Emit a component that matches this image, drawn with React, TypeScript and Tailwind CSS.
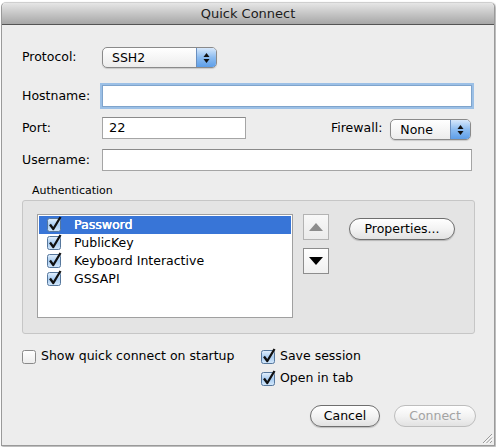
import React from "react";

const FONT = { fontFamily: '"Lucida Grande", "DejaVu Sans", sans-serif' };

function Check({ checked }: { checked: boolean }) {
  return (
    <svg width="16" height="16" viewBox="0 0 16 16" className="shrink-0">
      <defs>
        <linearGradient id={checked ? "cbOn" : "cbOff"} x1="0" y1="0" x2="0" y2="1">
          {checked ? (
            <>
              <stop offset="0" stopColor="#e4f0fc" />
              <stop offset="0.5" stopColor="#a9cdf2" />
              <stop offset="1" stopColor="#d4e8fb" />
            </>
          ) : (
            <>
              <stop offset="0" stopColor="#ffffff" />
              <stop offset="1" stopColor="#ececec" />
            </>
          )}
        </linearGradient>
      </defs>
      <rect
        x="0.5"
        y="2.5"
        width="13"
        height="13"
        rx="2"
        fill={`url(#${checked ? "cbOn" : "cbOff"})`}
        stroke={checked ? "#56779c" : "#8a8a8a"}
      />
      {checked && (
        <path d="M3 8.5 L6.3 13 L13.5 1" fill="none" stroke="#111" strokeWidth="2.3" strokeLinejoin="round" />
      )}
    </svg>
  );
}

function PopUp({ value, width }: { value: string; width: number }) {
  return (
    <div
      className="flex h-[21px] overflow-hidden rounded-[5px] border border-[#8a8a8a] bg-gradient-to-b from-white to-[#ececec] shadow-[0_1px_1px_rgba(0,0,0,0.15)]"
      style={{ width }}
    >
      <div className="flex-1 pl-[9px] text-[12.5px] leading-[19px] text-black">{value}</div>
      <div className="flex w-[20px] items-center justify-center border-l border-[#6a8fbf] bg-gradient-to-b from-[#d7e8fb] via-[#8cbcf0] to-[#5d9ee8]">
        <svg width="7" height="12" viewBox="0 0 7 12">
          <path d="M3.5 1 L6.5 5 L0.5 5 Z" fill="#111" />
          <path d="M3.5 11 L6.5 7 L0.5 7 Z" fill="#111" />
        </svg>
      </div>
    </div>
  );
}

function TextField({ value = "", focus = false, width }: { value?: string; focus?: boolean; width: number }) {
  return (
    <div
      className={
        "h-[22px] bg-white text-[13px] leading-[20px] text-black pl-[6px] " +
        (focus
          ? "border border-[#7fa4cc] shadow-[0_0_0_2px_#9cc0e6]"
          : "border border-[#a5a5a5] border-t-[#8a8a8a]")
      }
      style={{ width }}
    >
      {value}
    </div>
  );
}

function PillButton({ label, width, disabled = false }: { label: string; width: number; disabled?: boolean }) {
  return (
    <div
      className={
        "flex h-[22px] items-center justify-center rounded-full border bg-gradient-to-b from-white via-[#f3f3f3] to-[#e2e2e2] text-[12.5px] " +
        (disabled ? "border-[#bdbdbd] text-[#a3a3a3]" : "border-[#6e6e6e] text-black shadow-[0_1px_1px_rgba(0,0,0,0.2)]")
      }
      style={{ width }}
    >
      {label}
    </div>
  );
}

const METHODS = ["Password", "PublicKey", "Keyboard Interactive", "GSSAPI"];

export default function App() {
  return (
    <div className="h-[447px] w-[496px] bg-white" style={FONT}>
      <div className="ml-[1px] pt-[2px]">
        <div className="flex h-[444px] w-[494px] flex-col rounded-t-[5px] border border-[#9a9a9a] border-t-[#cfcfcf] bg-[#ededed] shadow-[1px_1px_2px_rgba(0,0,0,0.35)]">
          {/* Title bar */}
          <div className="flex h-[22px] items-center justify-center rounded-t-[5px] border-b border-[#545454] bg-gradient-to-b from-[#e6e6e6] to-[#a7a7a7] text-[13px] text-[#1c1c1c]">
            Quick Connect
          </div>

          <div className="flex flex-1 flex-col pl-[20px] text-[12.5px] text-black">
            {/* Protocol */}
            <div className="mt-[22px] flex h-[21px] items-center">
              <div className="w-[80px]">Protocol:</div>
              <PopUp value="SSH2" width={115} />
            </div>

            {/* Hostname */}
            <div className="mt-[17px] flex h-[22px] items-center">
              <div className="w-[80px]">Hostname:</div>
              <TextField focus width={370} />
            </div>

            {/* Port / Firewall */}
            <div className="mt-[10px] flex h-[22px] items-center">
              <div className="w-[80px]">Port:</div>
              <TextField value="22" width={144} />
              <div className="ml-[85px] mr-[8px]">Firewall:</div>
              <div className="mt-[3px]">
                <PopUp value="None" width={81} />
              </div>
            </div>

            {/* Username */}
            <div className="mt-[10px] flex h-[22px] items-center">
              <div className="w-[80px]">Username:</div>
              <TextField width={370} />
            </div>

            {/* Authentication */}
            <div className="mt-[13px] pl-[10px] text-[11px] leading-[14px]">Authentication</div>
            <div className="mt-[2px] flex h-[134px] w-[453px] rounded-[3px] border border-[#c6c6c6] bg-[#e4e4e4] pl-[14px] pt-[13px]">
              <div className="h-[104px] w-[256px] border border-[#a0a0a0] bg-white p-[1px]">
                {METHODS.map((m, i) => (
                  <div
                    key={m}
                    className={
                      "flex h-[18px] items-center " +
                      (i === 0 ? "bg-[#3875d7] text-white" : "text-black")
                    }
                  >
                    <div className="ml-[8px] mt-[-2px] w-[27px]">
                      <Check checked />
                    </div>
                    <span style={{ textShadow: i === 0 ? "0 0 0.6px #fff, 0.3px 0 0 #fff" : undefined }}>
                      {m}
                    </span>
                  </div>
                ))}
              </div>

              <div className="ml-[10px] flex flex-col gap-[8px]">
                <div className="flex h-[26px] w-[26px] items-center justify-center border border-[#b3b3b3] bg-gradient-to-b from-[#f8f8f8] to-[#ebebeb]">
                  <svg width="14" height="8" viewBox="0 0 14 8">
                    <path d="M7 0 L14 8 L0 8 Z" fill="#8c8c8c" />
                  </svg>
                </div>
                <div className="flex h-[26px] w-[26px] items-center justify-center border border-[#8d8d8d] bg-gradient-to-b from-white to-[#f0f0f0]">
                  <svg width="14" height="8" viewBox="0 0 14 8">
                    <path d="M0 0 L14 0 L7 8 Z" fill="#000" />
                  </svg>
                </div>
              </div>

              <div className="ml-[20px] mt-[4px]">
                <PillButton label="Properties..." width={106} />
              </div>
            </div>

            {/* Options */}
            <div className="mt-[14px] flex">
              <div className="flex h-[16px] w-[239px] items-center gap-[3px] text-[12.5px]">
                <Check checked={false} />
                <span>Show quick connect on startup</span>
              </div>
              <div className="flex flex-col gap-[6px] text-[12.5px]">
                <div className="flex h-[16px] items-center gap-[3px]">
                  <Check checked />
                  <span>Save session</span>
                </div>
                <div className="flex h-[16px] items-center gap-[3px]">
                  <Check checked />
                  <span>Open in tab</span>
                </div>
              </div>
            </div>

            {/* Buttons */}
            <div className="mt-[19px] flex gap-[14px] pl-[288px]">
              <PillButton label="Cancel" width={70} />
              <PillButton label="Connect" width={82} disabled />
            </div>

            {/* Resize grip */}
            <div className="mt-auto flex justify-end pb-[1px] pr-[1px]">
              <svg width="11" height="11" viewBox="0 0 11 11">
                <path d="M10 1 L1 10 M10 4.5 L4.5 10 M10 8 L8 10" stroke="#9a9a9a" strokeWidth="1" />
                <path d="M10.8 1.8 L1.8 10.8 M10.8 5.3 L5.3 10.8" stroke="#ffffff" strokeWidth="0.8" />
              </svg>
            </div>
          </div>
        </div>
      </div>
    </div>
  );
}
